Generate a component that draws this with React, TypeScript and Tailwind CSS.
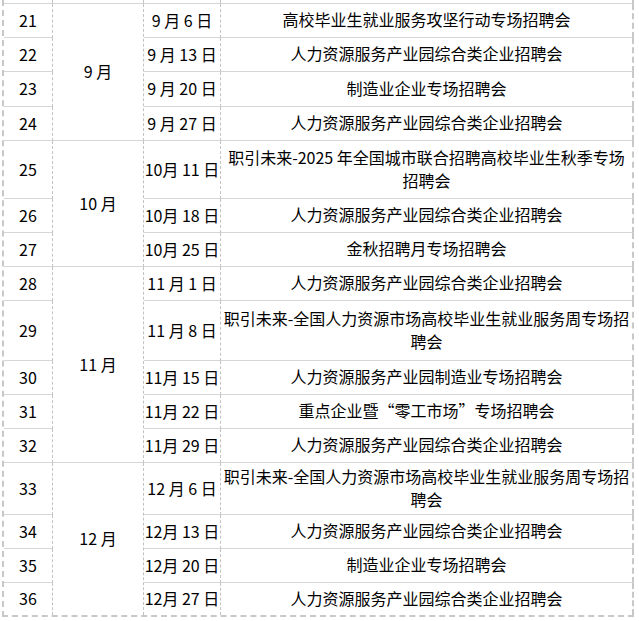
import React from "react";

type Row = { n: number; d: string; t: string[] };

const months: { m: string; span: string; rows: Row[] }[] = [
  {
    m: "9 月",
    span: "row-span-4",
    rows: [
      { n: 21, d: "9 月 6 日", t: ["高校毕业生就业服务攻坚行动专场招聘会"] },
      { n: 22, d: "9 月 13 日", t: ["人力资源服务产业园综合类企业招聘会"] },
      { n: 23, d: "9 月 20 日", t: ["制造业企业专场招聘会"] },
      { n: 24, d: "9 月 27 日", t: ["人力资源服务产业园综合类企业招聘会"] },
    ],
  },
  {
    m: "10 月",
    span: "row-span-3",
    rows: [
      { n: 25, d: "10月 11 日", t: ["职引未来-2025 年全国城市联合招聘高校毕业生秋季专场", "招聘会"] },
      { n: 26, d: "10月 18 日", t: ["人力资源服务产业园综合类企业招聘会"] },
      { n: 27, d: "10月 25 日", t: ["金秋招聘月专场招聘会"] },
    ],
  },
  {
    m: "11 月",
    span: "row-span-5",
    rows: [
      { n: 28, d: "11 月 1 日", t: ["人力资源服务产业园综合类企业招聘会"] },
      { n: 29, d: "11 月 8 日", t: ["职引未来-全国人力资源市场高校毕业生就业服务周专场招", "聘会"] },
      { n: 30, d: "11月 15 日", t: ["人力资源服务产业园制造业专场招聘会"] },
      { n: 31, d: "11月 22 日", t: ["重点企业暨“零工市场”专场招聘会"] },
      { n: 32, d: "11月 29 日", t: ["人力资源服务产业园综合类企业招聘会"] },
    ],
  },
  {
    m: "12 月",
    span: "row-span-4",
    rows: [
      { n: 33, d: "12 月 6 日", t: ["职引未来-全国人力资源市场高校毕业生就业服务周专场招", "聘会"] },
      { n: 34, d: "12月 13 日", t: ["人力资源服务产业园综合类企业招聘会"] },
      { n: 35, d: "12月 20 日", t: ["制造业企业专场招聘会"] },
      { n: 36, d: "12月 27 日", t: ["人力资源服务产业园综合类企业招聘会"] },
    ],
  },
];

const vline = "border-r border-r-[#c2c2c2] [border-right-style:dashed]";
const hline = "border-b border-b-[#d6d6d6]";
const edge = "border-r-2 border-r-[#c8c8c8] [border-right-style:dashed]";

function Title({ t }: { t: string[] }) {
  const text = (s: string) =>
    s.split(/([“”])/).map((p, i) =>
      p === "“" || p === "”" ? (
        <span key={i} className="[font-feature-settings:'fwid']">
          {p}
        </span>
      ) : (
        <React.Fragment key={i}>{p}</React.Fragment>
      )
    );
  return (
    <div className="flex flex-col items-center leading-[23px]">
      {t.map((line, i) => (
        <span key={i}>{text(line)}</span>
      ))}
    </div>
  );
}

export default function App() {
  return (
    <div
      lang="zh-CN"
      className="min-h-screen bg-white pl-[2px] text-[16px] text-black"
      style={{ fontFamily: '"Noto Sans CJK SC", "Noto Sans", sans-serif' }}
    >
      <div className="grid w-[632px] grid-cols-[49px_91px_77px_413px] grid-rows-[4px_34px_34px_35px_34px_58px_34px_34px_34px_60px_34px_34px_34px_52px_34px_34px_32px] border-l-2 border-l-[#c8c8c8] [border-left-style:dashed] border-b-2 border-b-[#c8c8c8] [border-bottom-style:dashed]">
        <div className={`${vline} ${hline}`} />
        <div className={`${vline} ${hline}`} />
        <div className={`${vline} ${hline}`} />
        <div className={`${hline} ${edge}`} />
        {months.map((g) =>
          g.rows.map((r, i) => {
            const hb = r.n === 36 ? "" : hline;
            return (
              <React.Fragment key={r.n}>
                <div className={`${vline} ${hb} flex items-center justify-center pb-[2px]`}>{r.n}</div>
                {i === 0 && (
                  <div
                    className={`${g.span} ${vline} ${g.m === "12 月" ? "" : hline} flex items-center justify-center pb-[2px]`}
                  >
                    {g.m}
                  </div>
                )}
                <div className={`${vline} ${hb} flex items-center justify-center whitespace-nowrap pb-[2px]`}>
                  {r.d}
                </div>
                <div className={`${hb} ${edge} flex items-center justify-center whitespace-nowrap pb-[2px]`}>
                  <Title t={r.t} />
                </div>
              </React.Fragment>
            );
          })
        )}
      </div>
    </div>
  );
}
